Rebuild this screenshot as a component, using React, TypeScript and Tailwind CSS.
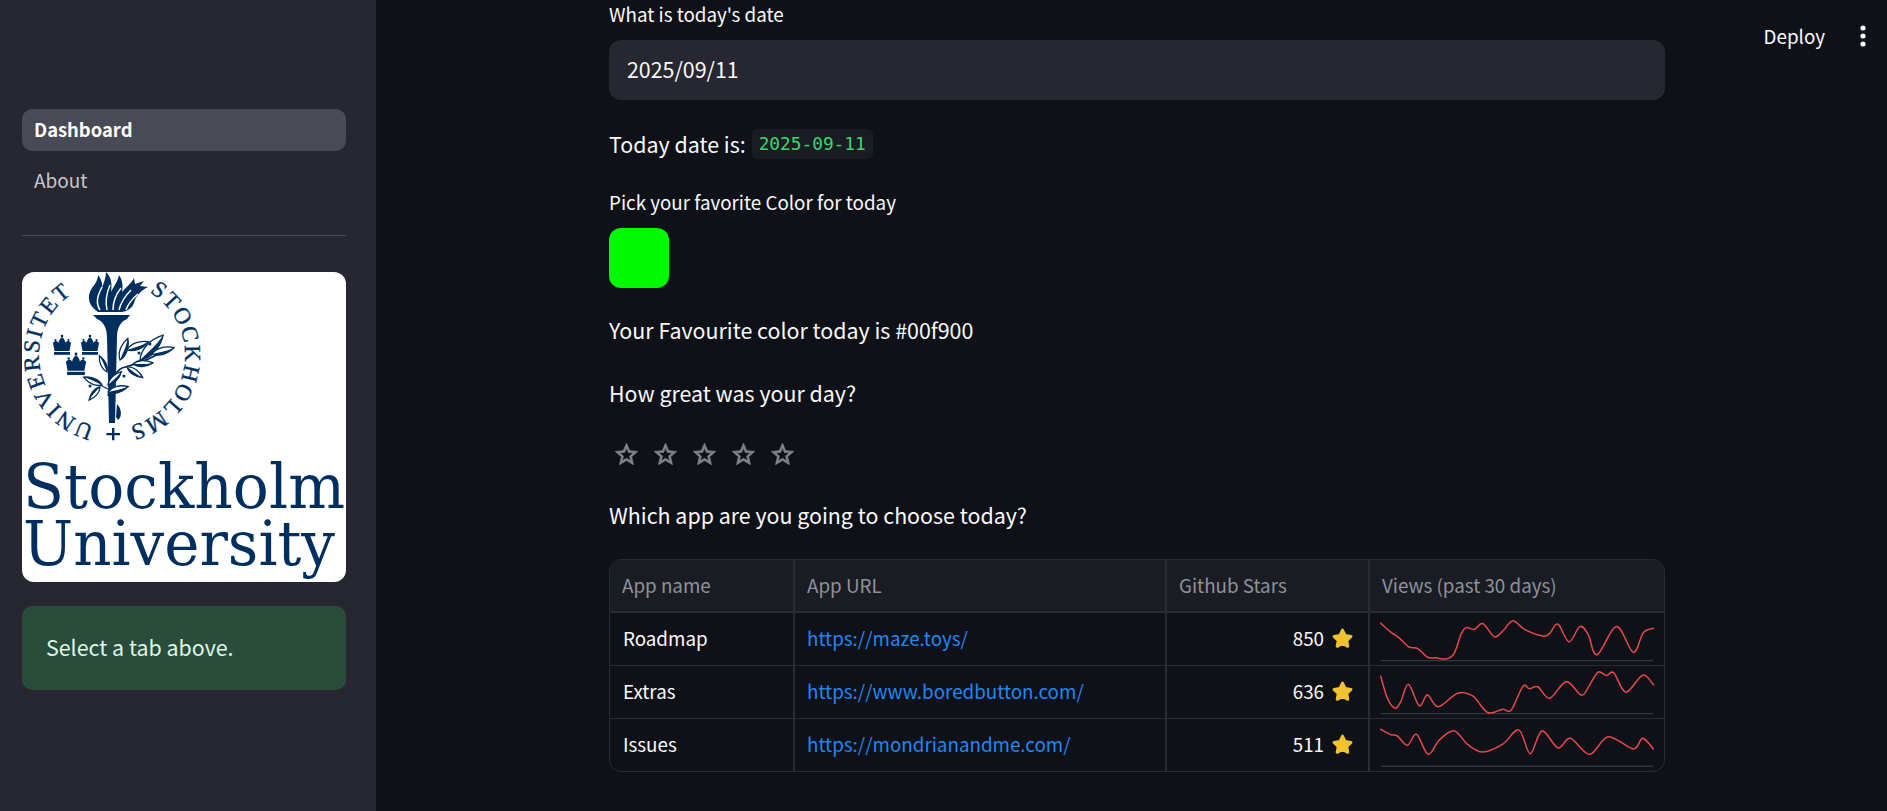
import React from "react";

const FONT = "font-['Noto_Sans_CJK_SC','Noto_Sans',sans-serif]";

function smooth(p: number[][]) {
  let d = `M${p[0][0]} ${p[0][1]}`;
  for (let i = 0; i < p.length - 1; i++) {
    const a = p[i - 1] || p[i], b = p[i], c = p[i + 1], e = p[i + 2] || c;
    d += ` C${b[0] + (c[0] - a[0]) / 6} ${b[1] + (c[1] - a[1]) / 6} ${c[0] - (e[0] - b[0]) / 6} ${c[1] - (e[1] - b[1]) / 6} ${c[0]} ${c[1]}`;
  }
  return d;
}

const SPARKS = [
  { top: 12, base: 152, pts: [[65,42],[95,68],[120,85],[150,112],[175,116],[205,142],[230,144],[262,147],[285,130],[305,75],[320,55],[345,60],[370,43],[405,82],[430,65],[460,35],[495,60],[550,80],[570,72],[595,45],[628,97],[660,52],[685,75],[712,135],[770,52],[820,128],[850,70],[880,57]] },
  { top: 170, base: 310, pts: [[65,200],[85,265],[108,294],[125,275],[148,224],[180,287],[205,255],[237,290],[295,250],[340,258],[385,307],[430,297],[455,300],[490,230],[510,237],[535,231],[570,265],[620,216],[665,256],[690,225],[715,188],[740,198],[762,190],[798,247],[848,197],[880,225]] },
  { top: 328, base: 467, pts: [[65,358],[95,374],[115,378],[145,405],[172,373],[207,432],[240,390],[285,363],[325,403],[370,425],[430,402],[478,360],[512,430],[547,363],[595,413],[632,385],[690,432],[745,380],[820,416],[848,385],[880,416]] },
];

function Spark({ i }: { i: number }) {
  const s = SPARKS[i];
  return (
    <svg viewBox={`33 ${s.top} 879 153`} className="block w-full h-full" preserveAspectRatio="none">
      <line x1="65" x2="880" y1={s.base} y2={s.base} stroke="#35363d" strokeWidth="4" />
      <path d={smooth(s.pts)} fill="none" stroke="#e8474c" strokeWidth="4.5" strokeLinecap="round" strokeLinejoin="round" />
    </svg>
  );
}

function GoldStar() {
  return (
    <svg viewBox="0 0 24 24" className="w-[23px] h-[23px]">
      <path d="M12 3.2 L14.9 8.9 L20.9 9.8 L16.5 14.1 L17.6 20.2 L12 17.2 L6.4 20.2 L7.5 14.1 L3.1 9.8 L9.1 8.9 Z" fill="#f2c230" stroke="#f2c230" strokeWidth="3" strokeLinejoin="round" />
    </svg>
  );
}

function OutlineStar() {
  return (
    <svg viewBox="0 0 24 24" className="w-[27px] h-[27px]" fill="#808389" stroke="#808389" strokeWidth="0.7">
      <path d="M22 9.24l-7.19-.62L12 2 9.19 8.63 2 9.24l5.46 4.73L5.82 21 12 17.27 18.18 21l-1.63-7.03L22 9.24zM12 15.4l-3.76 2.27 1-4.28-3.32-2.88 4.38-.38L12 6.1l1.71 4.04 4.38.38-3.32 2.88 1 4.28L12 15.4z" />
    </svg>
  );
}

function Crown({ x, y, s = 1 }: { x: number; y: number; s?: number }) {
  return (
    <g transform={`translate(${x} ${y}) scale(${s})`} fill="#002f5f">
      <path d="M-9 -2 C-7 -5 -4 -4 -3.5 -2 C-3 -5 -2 -6 0 -8 C2 -6 3 -5 3.5 -2 C4 -4 7 -5 9 -2 L7.5 6 L-7.5 6 Z" />
      <rect x="-8" y="7" width="16" height="2.8" />
      <circle cx="0" cy="-9" r="1.3" />
      <circle cx="-6.5" cy="-5" r="1.1" />
      <circle cx="6.5" cy="-5" r="1.1" />
    </g>
  );
}

function Leaf({ x, y, r, l = 22 }: { x: number; y: number; r: number; l?: number }) {
  const w = l * 0.2;
  return (
    <g transform={`translate(${x} ${y}) rotate(${r})`}>
      <path d={`M0 0 C${l * 0.25} ${-w} ${l * 0.65} ${-w} ${l} 0 C${l * 0.65} ${w} ${l * 0.25} ${w} 0 0 Z`} fill="#ffffff" stroke="#002f5f" strokeWidth="1.3" />
      <path d={`M0 0 C${l * 0.3} ${w * 0.05} ${l * 0.6} ${w * 0.3} ${l} 0 C${l * 0.65} ${w} ${l * 0.25} ${w} 0 0 Z`} fill="#002f5f" />
    </g>
  );
}

function Logo() {
  return (
    <svg viewBox="0 0 324 310" className="block w-full h-full">
      <defs>
        <path id="su-ring" d="M90 156 A73 73 0 1 1 90 10 A73 73 0 1 1 90 156" />
      </defs>
      <g fill="#002f5f">
        <g fontFamily="'Liberation Serif',serif" fontSize="23" stroke="#002f5f" strokeWidth="0.35">
          <text><textPath href="#su-ring" startOffset="18" textLength="168">UNIVERSITET</textPath></text>
          <text><textPath href="#su-ring" startOffset="268" textLength="172">STOCKHOLMS</textPath></text>
        </g>
        <path d="M90 157 h2.4 v5 h5.6 v2.2 h-5.6 v5 h-2.4 v-5 h-5.6 v-2.2 h5.6 Z" transform="translate(0 -1)" />
        {/* torch */}
        <path d="M71 43 H108 L105 47 C98 50 95 56 95 66 L93 151 H87 L85 66 C85 56 82 50 75 47 Z" />
        {/* flames */}
        <path d="M76 40 C67 34 64 25 70 16 C74 11 76 7 76 3 C81 9 81 16 79 22 C79 16 84 8 84 0 C90 6 90 13 89 20 C92 14 96 9 97 3 C101 9 101 14 100 20 C104 15 110 11 112 6 L113 12 L122 9 L118 14 L126 15 C118 19 114 24 112 31 C110 36 106 39 100 40 Z" />
        <path d="M78 38 C73 30 76 23 80 15 M85 38 C83 29 85 20 88 13 M91 38 C91 28 95 21 99 16 M97 38 C99 30 103 24 109 18 M104 38 C106 32 110 27 116 22" fill="none" stroke="#fff" strokeWidth="1.5" />
        <Crown x={40} y={73} />
        <Crown x={68} y={73} />
        <Crown x={54} y={92} s={1.12} />
        {/* branch */}
        <path d="M86 124 C90 110 92 100 100 96 C115 92 132 86 146 76" fill="none" stroke="#002f5f" strokeWidth="1.6" />
        <path d="M88 118 C84 116 80 114 74 111" fill="none" stroke="#002f5f" strokeWidth="1.2" />
        <Leaf x={98} y={88} r={-70} l={23} />
        <Leaf x={105} y={78} r={-21} l={23} />
        <Leaf x={118} y={88} r={-47} l={34} />
        <Leaf x={130} y={82} r={-16} l={23} />
        <Leaf x={105} y={95} r={34} l={19} />
        <Leaf x={111} y={92} r={-3} l={20} />
        <Leaf x={85} y={100} r={-115} l={18} />
        <Leaf x={86} y={113} r={-45} l={19} />
        <Leaf x={86} y={120} r={-15} l={21} />
        <Leaf x={80} y={113} r={203} l={20} />
        <Leaf x={78} y={115} r={130} l={17} />
        <circle cx="117" cy="81" r="1.5" /><circle cx="128" cy="72" r="1.5" /><circle cx="102" cy="104" r="1.5" /><circle cx="68" cy="114" r="1.5" />
        <path d="M95 132 C100 137 100 145 96 148 L94 145 Z" />
      </g>
      <g fill="#002f5f" fontFamily="'DejaVu Serif',serif" fontSize="62">
        <text x="1" y="236" textLength="322" lengthAdjust="spacingAndGlyphs">Stockholm</text>
        <text x="1" y="293" textLength="312" lengthAdjust="spacingAndGlyphs">University</text>
      </g>
    </svg>
  );
}

const ROWS = [
  ["Roadmap", "https://maze.toys/", "850"],
  ["Extras", "https://www.boredbutton.com/", "636"],
  ["Issues", "https://mondrianandme.com/", "511"],
];

const COLS = "grid grid-cols-[185px_372px_203px_294px]";

export default function App() {
  return (
    <div className={`${FONT} relative flex h-[811px] w-full overflow-hidden bg-[#0e1117] text-[#fafafa]`}>
      <aside className="flex h-full w-[376px] shrink-0 flex-col bg-[#262730] pl-[22px] pr-[30px] pt-[109px]">
        <div className="flex h-[42px] items-center rounded-[10px] bg-[#484a55] px-3 pb-[2px] text-[18.4px] font-bold leading-none text-white">Dashboard</div>
        <div className="mt-[9px] flex h-[42px] items-center px-3 pb-[3px] text-[19px] leading-none text-[#c6c6cb]">About</div>
        <div className="mt-[33px] h-px bg-[#4b4c56]" />
        <div className="mt-[36px] h-[310px] overflow-hidden rounded-[12px] bg-white">
          <Logo />
        </div>
        <div className="mt-[24px] flex h-[84px] items-center rounded-[10px] bg-[#2a4d3b] px-6 pb-[2px] text-[21.4px] leading-none text-[#dff7e6]">Select a tab above.</div>
      </aside>

      <main className="ml-[233px] w-[1056px] shrink-0">
        <div className="flex h-[30px] items-center pb-[1px] text-[18.8px] leading-none">What is today's date</div>
        <div className="mt-[10px] flex h-[60px] items-center rounded-[12px] bg-[#262730] px-[18px] pb-[2px] text-[21.4px] leading-none">2025/09/11</div>

        <div className="mt-[29px] flex h-[30px] items-center text-[21.4px] leading-none">
          <span>Today date is:</span>
          <code className="ml-[6px] flex h-[30px] items-center rounded-[6px] bg-[#1a1c24] px-[7px] font-['DejaVu_Sans_Mono',monospace] text-[17.8px] leading-none text-[#3dd56d]">2025-09-11</code>
        </div>

        <div className="mt-[29px] flex h-[30px] items-center pb-[2px] text-[18.8px] leading-none">Pick your favorite Color for today</div>
        <div className="mt-[10px] h-[60px] w-[60px] rounded-[12px] bg-[#00f900]" />

        <div className="mt-[27px] flex h-[30px] items-center text-[21.4px] leading-none">Your Favourite color today is #00f900</div>
        <div className="mt-[33px] flex h-[30px] items-center text-[21.4px] leading-none">How great was your day?</div>

        <div className="mt-[33px] ml-[4px] flex h-[27px] gap-[12px]">
          <OutlineStar /><OutlineStar /><OutlineStar /><OutlineStar /><OutlineStar />
        </div>

        <div className="mt-[33px] flex h-[30px] items-center pb-[2px] text-[21.4px] leading-none">Which app are you going to choose today?</div>

        <div className="mt-[28px] w-[1056px] overflow-hidden rounded-[12px] border border-[#2a2c34] text-[18.8px] leading-none">
          <div className={`${COLS} h-[53px] border-b-2 border-[#2a2c34] bg-[#1a1c24] text-[#8f9198]`}>
            {["App name", "App URL", "Github Stars", "Views (past 30 days)"].map((h, i) => (
              <div key={h} className={`flex items-center px-3 ${i < 3 ? "border-r-2 border-[#2a2c34]" : ""}`}>{h}</div>
            ))}
          </div>
          {ROWS.map((r, i) => (
            <div key={r[0]} className={`${COLS} ${i < 2 ? "h-[53px] border-b border-[#2a2c34]" : "h-[52px]"}`}>
              <div className="flex items-center border-r-2 border-[#2a2c34] px-[13px] pb-[1px]">{r[0]}</div>
              <div className="flex items-center border-r-2 border-[#2a2c34] px-[12px] pb-[1px] text-[#1e88f5]">{r[1]}</div>
              <div className="flex items-center justify-end gap-[7px] border-r-2 border-[#2a2c34] pr-[14px] pb-[1px]">
                <span>{r[2]}</span>
                <GoldStar />
              </div>
              <div className="min-w-0"><Spark i={i} /></div>
            </div>
          ))}
        </div>
      </main>

      <div className="absolute right-[62px] top-[24px] text-[18.8px] leading-[24px] text-[#fafafa]">Deploy</div>
      <svg viewBox="0 0 6 22" className="absolute left-[1860px] top-[25px] h-[22px] w-[6px]" fill="#fafafa">
        <circle cx="3" cy="3" r="2.6" /><circle cx="3" cy="11" r="2.6" /><circle cx="3" cy="19" r="2.6" />
      </svg>
    </div>
  );
}
